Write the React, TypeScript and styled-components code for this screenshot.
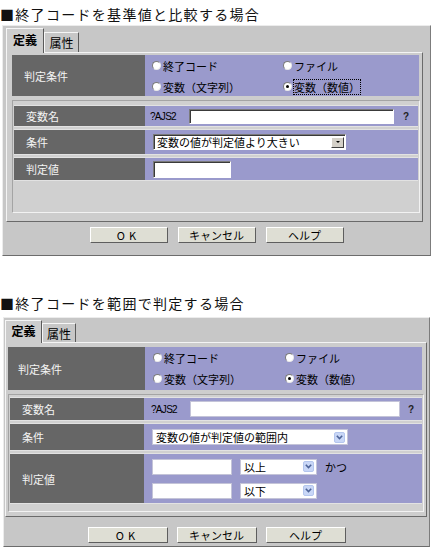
import React from "react";
import styled, { createGlobalStyle } from "styled-components";

const GlobalStyle = createGlobalStyle`
  html, body { margin: 0; padding: 0; background: #ffffff; }
  body { font-family: "Noto Sans CJK JP", "Liberation Sans", sans-serif; color: #000; }
  #root { width: 433px; overflow: hidden; }
`;

const Page = styled.div`
  display: flex;
  flex-direction: column;
  width: 433px;
`;

const Title = styled.h2<{ $mt: number }>`
  margin: ${(p) => p.$mt}px 0 0 0;
  font-size: 14px;
  line-height: 18px;
  font-weight: normal;
  letter-spacing: 1.3px;
  white-space: nowrap;
  color: #111;
`;

type Geo = {
  mt: number; ml: number; w: number; h: number;
  tabPl: number; tabs: [number, number, number, number];
  panelMl: number; panelW: number; panelH: number;
  secMl: number; secMt: number; secW: number; secH: number; secLabelW: number; secLabelPl: number; radioPl: number; radioCol: number;
  grpW: number; grpH: number; grpPt: number; rowLabelW: number; rowLabelPl: number;
  btnMt: number; btnW: number; btnH: number; btnGap: number;
};

const Dialog = styled.div<{ $g: Geo }>`
  box-sizing: border-box;
  margin-top: ${(p) => p.$g.mt}px;
  margin-left: ${(p) => p.$g.ml}px;
  width: ${(p) => p.$g.w}px;
  height: ${(p) => p.$g.h}px;
  border: 1px solid;
  border-color: #ececec #7c7c7c #6c6c6c #ececec;
  background: #c7c7c7;
  display: flex;
  flex-direction: column;
`;

const TabStrip = styled.div<{ $pl: number }>`
  display: flex;
  align-items: flex-end;
  padding: 2px 0 0 ${(p) => p.$pl}px;
  position: relative;
  z-index: 1;
`;

const Tab = styled.div<{ $w: number; $h: number; $active?: boolean }>`
  box-sizing: border-box;
  width: ${(p) => p.$w}px;
  border: 1px solid;
  border-bottom: none;
  border-color: #f6f6f6 #5a5a5a transparent #f6f6f6;
  background: ${(p) => (p.$active ? "#cdcdcd" : "#c7c7c7")};
  margin-bottom: ${(p) => (p.$active ? -1 : 0)}px;
  height: ${(p) => p.$h + (p.$active ? 1 : 0)}px;
  font-size: 12px;
  font-weight: ${(p) => (p.$active ? "bold" : "normal")};
  display: flex;
  align-items: center;
  justify-content: center;
  padding-bottom: ${(p) => (p.$active ? 3 : 0)}px;
`;

const Panel = styled.div<{ $g: Geo }>`
  box-sizing: border-box;
  margin-left: ${(p) => p.$g.panelMl}px;
  width: ${(p) => p.$g.panelW}px;
  height: ${(p) => p.$g.panelH}px;
  border: 1px solid;
  border-color: #f4f4f4 #6a6a6a #6a6a6a #f4f4f4;
  background: #cdcdcd;
  display: flex;
  flex-direction: column;
`;

const Section = styled.div<{ $g: Geo }>`
  display: flex;
  margin: ${(p) => p.$g.secMt}px 0 0 ${(p) => p.$g.secMl}px;
  width: ${(p) => p.$g.secW}px;
  height: ${(p) => p.$g.secH}px;
`;

const DarkLabel = styled.div<{ $w: number; $pl: number }>`
  box-sizing: border-box;
  width: ${(p) => p.$w}px;
  flex: none;
  background: #666666;
  color: #f4f4f4;
  font-size: 11px;
  display: flex;
  align-items: center;
  padding-left: ${(p) => p.$pl}px;
`;

const BlueArea = styled.div<{ $pl?: number }>`
  flex: 1;
  background: #9a9acc;
  display: flex;
  align-items: center;
  padding-left: ${(p) => p.$pl ?? 0}px;
  font-size: 11px;
`;

const RadioGrid = styled.div<{ $pl: number; $col: number }>`
  flex: 1;
  background: #9a9acc;
  display: grid;
  grid-template-columns: ${(p) => p.$col}px 1fr;
  grid-template-rows: 21px 21px;
  padding-left: ${(p) => p.$pl}px;
  font-size: 11px;
`;

const RadioItem = styled.label`
  display: flex;
  align-items: center;
  white-space: nowrap;
`;

const RadioDot = styled.span<{ $checked?: boolean }>`
  box-sizing: border-box;
  width: 9px;
  height: 9px;
  border-radius: 50%;
  border: 1px solid;
  border-color: #7a7a7a #e8e8e8 #e8e8e8 #7a7a7a;
  background: #ffffff;
  margin-right: 1px;
  display: flex;
  align-items: center;
  justify-content: center;
  &::after {
    content: "";
    width: 3px;
    height: 3px;
    border-radius: 50%;
    background: ${(p) => (p.$checked ? "#000" : "transparent")};
  }
`;

const RadioText = styled.span<{ $focus?: boolean }>`
  outline: ${(p) => (p.$focus ? "1px dotted #000" : "none")};
  outline-offset: -1px;
  padding: 0 1px;
`;

const GroupBox = styled.div<{ $g: Geo }>`
  box-sizing: border-box;
  margin: 4px 0 0 ${(p) => p.$g.secMl}px;
  width: ${(p) => p.$g.grpW}px;
  height: ${(p) => p.$g.grpH}px;
  border: 1px solid;
  border-color: #a4a4a4 #f2f2f2 #f2f2f2 #a4a4a4;
  background: #d0d0d0;
  padding: ${(p) => p.$g.grpPt}px 1px 0 1px;
  display: flex;
  flex-direction: column;
  gap: 4px;
`;

const Row = styled.div<{ $h: number }>`
  display: flex;
  height: ${(p) => p.$h}px;
  box-shadow: 0 -1px 0 #e2e2e2, 0 1px 0 #e2e2e2;
`;

const FieldColumn = styled.div`
  display: flex;
  flex-direction: column;
  gap: 8px;
`;

const FieldLine = styled.div`
  display: flex;
  align-items: center;
`;

const VarPrefix = styled.span`
  width: 39px;
  font-family: "Liberation Sans", sans-serif;
  font-size: 10px;
  letter-spacing: -0.7px;
`;

const Help = styled.span<{ $ml: number }>`
  margin-left: ${(p) => p.$ml}px;
  font-family: "Liberation Sans", sans-serif;
  font-size: 10px;
  font-weight: bold;
  color: #222;
`;

const ClassicInput = styled.div<{ $w: number; $h: number }>`
  box-sizing: border-box;
  width: ${(p) => p.$w}px;
  height: ${(p) => p.$h}px;
  background: #fff;
  border: 1px solid;
  border-color: #7a7a7a #ffffff #ffffff #7a7a7a;
  box-shadow: inset 1px 1px 0 #3a3a3a;
`;

const FlatInput = styled.div<{ $w: number; $h: number }>`
  box-sizing: border-box;
  width: ${(p) => p.$w}px;
  height: ${(p) => p.$h}px;
  background: #fff;
  border: 1px solid #c4c4d8;
`;

const ClassicSelect = styled.div<{ $w: number; $h: number }>`
  box-sizing: border-box;
  width: ${(p) => p.$w}px;
  height: ${(p) => p.$h}px;
  background: #fff;
  border: 1px solid;
  border-color: #7a7a7a #ffffff #ffffff #7a7a7a;
  box-shadow: inset 1px 1px 0 #3a3a3a;
  display: flex;
  align-items: center;
  padding: 0 1px 0 3px;
  font-size: 11px;
`;

const SelectText = styled.span`
  flex: 1;
  white-space: nowrap;
  line-height: 14px;
`;

const ClassicArrow = styled.span`
  box-sizing: border-box;
  flex: none;
  width: 13px;
  height: 11px;
  background: #d4d0c8;
  border: 1px solid;
  border-color: #ffffff #404040 #404040 #ffffff;
  display: flex;
  align-items: center;
  justify-content: center;
  &::after {
    content: "";
    border-left: 2px solid transparent;
    border-right: 2px solid transparent;
    border-top: 2px solid #000;
  }
`;

const FlatSelect = styled.div<{ $w: number; $h: number; $ml?: number }>`
  box-sizing: border-box;
  width: ${(p) => p.$w}px;
  height: ${(p) => p.$h}px;
  margin-left: ${(p) => p.$ml ?? 0}px;
  background: #fff;
  border: 1px solid #c4c4d8;
  display: flex;
  align-items: center;
  padding: 0 2px 0 3px;
  font-size: 11px;
`;

const ChevronBtn = styled.span`
  box-sizing: border-box;
  flex: none;
  width: 11px;
  height: 11px;
  border-radius: 2px;
  background: #c9d7f7;
  border: 1px solid #b4c6ee;
  display: flex;
  align-items: center;
  justify-content: center;
`;

const AndText = styled.span`
  margin-left: 8px;
  font-size: 11px;
`;

const ButtonBar = styled.div<{ $mt: number; $gap: number }>`
  display: flex;
  justify-content: center;
  gap: ${(p) => p.$gap}px;
  margin-top: ${(p) => p.$mt}px;
`;

const Button = styled.button<{ $w: number; $h: number; $ls?: number }>`
  box-sizing: border-box;
  width: ${(p) => p.$w}px;
  height: ${(p) => p.$h}px;
  padding: 0;
  background: #deded4;
  border: 1px solid;
  border-color: #ffffff #5e5e5e #5e5e5e #ffffff;
  font-family: "Noto Sans CJK JP", "Liberation Sans", sans-serif;
  font-size: 11px;
  line-height: 1;
  letter-spacing: ${(p) => p.$ls ?? 0}px;
  color: #000;
  display: flex;
  align-items: center;
  justify-content: center;
`;

const Chevron = () => (
  <svg width="7" height="5" viewBox="0 0 7 5">
    <path d="M0.8 0.8 L3.5 3.5 L6.2 0.8" fill="none" stroke="#4d6397" strokeWidth="1.6" />
  </svg>
);

const topGeo: Geo = {
  mt: 2, ml: 2, w: 429, h: 231,
  tabPl: 3, tabs: [38, 24, 35, 20],
  panelMl: 3, panelW: 417, panelH: 170,
  secMl: 5, secMt: 2, secW: 407, secH: 41, secLabelW: 133, secLabelPl: 12, radioPl: 7, radioCol: 131,
  grpW: 408, grpH: 113, grpPt: 5, rowLabelW: 131, rowLabelPl: 12,
  btnMt: 5, btnW: 78, btnH: 16, btnGap: 10,
};

const bottomGeo: Geo = {
  mt: 5, ml: 3, w: 427, h: 230,
  tabPl: 1, tabs: [37, 22, 34, 19],
  panelMl: 1, panelW: 422, panelH: 175,
  secMl: 2, secMt: 4, secW: 414, secH: 43, secLabelW: 137, secLabelPl: 10, radioPl: 8, radioCol: 132,
  grpW: 416, grpH: 118, grpPt: 3, rowLabelW: 134, rowLabelPl: 12,
  btnMt: 10, btnW: 80, btnH: 16, btnGap: 9,
};

type DialogProps = { g: Geo; focus?: boolean; children: React.ReactNode };

const SettingsDialog = ({ g, focus, children }: DialogProps) => (
  <Dialog $g={g}>
    <TabStrip $pl={g.tabPl}>
      <Tab $w={g.tabs[0]} $h={g.tabs[1]} $active>定義</Tab>
      <Tab $w={g.tabs[2]} $h={g.tabs[3]}>属性</Tab>
    </TabStrip>
    <Panel $g={g}>
      <Section $g={g}>
        <DarkLabel $w={g.secLabelW} $pl={g.secLabelPl}>判定条件</DarkLabel>
        <RadioGrid $pl={g.radioPl} $col={g.radioCol}>
          <RadioItem><RadioDot /><RadioText>終了コード</RadioText></RadioItem>
          <RadioItem><RadioDot /><RadioText>ファイル</RadioText></RadioItem>
          <RadioItem><RadioDot /><RadioText>変数（文字列）</RadioText></RadioItem>
          <RadioItem><RadioDot $checked /><RadioText $focus={focus}>変数（数値）</RadioText></RadioItem>
        </RadioGrid>
      </Section>
      <GroupBox $g={g}>{children}</GroupBox>
    </Panel>
    <ButtonBar $mt={g.btnMt} $gap={g.btnGap}>
      <Button $w={g.btnW} $h={g.btnH} $ls={4}>OK</Button>
      <Button $w={g.btnW} $h={g.btnH}>キャンセル</Button>
      <Button $w={g.btnW} $h={g.btnH}>ヘルプ</Button>
    </ButtonBar>
  </Dialog>
);

export default function App() {
  return (
    <Page>
      <GlobalStyle />
      <Title $mt={5}>■終了コードを基準値と比較する場合</Title>
      <SettingsDialog g={topGeo} focus>
        <Row $h={20}>
          <DarkLabel $w={topGeo.rowLabelW} $pl={topGeo.rowLabelPl}>変数名</DarkLabel>
          <BlueArea $pl={5}>
            <VarPrefix>?AJS2</VarPrefix>
            <ClassicInput $w={205} $h={15} />
            <Help $ml={9}>?</Help>
          </BlueArea>
        </Row>
        <Row $h={24}>
          <DarkLabel $w={topGeo.rowLabelW} $pl={topGeo.rowLabelPl}>条件</DarkLabel>
          <BlueArea $pl={8}>
            <ClassicSelect $w={193} $h={16}>
              <SelectText>変数の値が判定値より大きい</SelectText>
              <ClassicArrow />
            </ClassicSelect>
          </BlueArea>
        </Row>
        <Row $h={22}>
          <DarkLabel $w={topGeo.rowLabelW} $pl={topGeo.rowLabelPl}>判定値</DarkLabel>
          <BlueArea $pl={8}>
            <ClassicInput $w={78} $h={17} />
          </BlueArea>
        </Row>
      </SettingsDialog>

      <Title $mt={38}>■終了コードを範囲で判定する場合</Title>
      <SettingsDialog g={bottomGeo}>
        <Row $h={22}>
          <DarkLabel $w={bottomGeo.rowLabelW} $pl={bottomGeo.rowLabelPl}>変数名</DarkLabel>
          <BlueArea $pl={7}>
            <VarPrefix>?AJS2</VarPrefix>
            <FlatInput $w={210} $h={16} />
            <Help $ml={8}>?</Help>
          </BlueArea>
        </Row>
        <Row $h={26}>
          <DarkLabel $w={bottomGeo.rowLabelW} $pl={bottomGeo.rowLabelPl}>条件</DarkLabel>
          <BlueArea $pl={8}>
            <FlatSelect $w={196} $h={16}>
              <SelectText>変数の値が判定値の範囲内</SelectText>
              <ChevronBtn><Chevron /></ChevronBtn>
            </FlatSelect>
          </BlueArea>
        </Row>
        <Row $h={49}>
          <DarkLabel $w={bottomGeo.rowLabelW} $pl={bottomGeo.rowLabelPl}>判定値</DarkLabel>
          <BlueArea $pl={8}>
            <FieldColumn>
              <FieldLine>
                <FlatInput $w={80} $h={16} />
                <FlatSelect $w={77} $h={16} $ml={8}>
                  <SelectText>以上</SelectText>
                  <ChevronBtn><Chevron /></ChevronBtn>
                </FlatSelect>
                <AndText>かつ</AndText>
              </FieldLine>
              <FieldLine>
                <FlatInput $w={80} $h={16} />
                <FlatSelect $w={77} $h={16} $ml={8}>
                  <SelectText>以下</SelectText>
                  <ChevronBtn><Chevron /></ChevronBtn>
                </FlatSelect>
              </FieldLine>
            </FieldColumn>
          </BlueArea>
        </Row>
      </SettingsDialog>
    </Page>
  );
}
